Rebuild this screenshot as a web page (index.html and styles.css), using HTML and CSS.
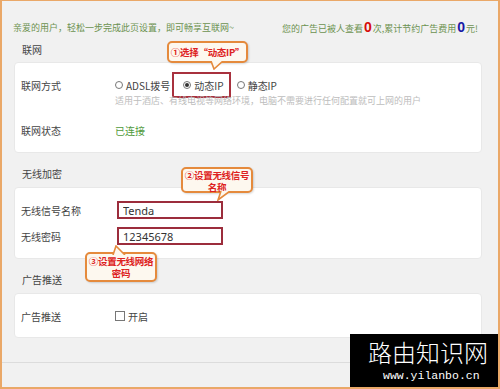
FILE: index.html
```html
<!DOCTYPE html>
<html lang="zh-CN">
<head>
    <meta charset="UTF-8">
    <meta name="viewport" content="width=device-width, initial-scale=1.0">
    <title>快速设置</title>
    <link rel="stylesheet" href="styles.css">
</head>
<body>
    <div class="page">
        <div class="topbar">
            <span class="welcome">亲爱的用户，轻松一步完成此页设置，即可畅享互联网~</span>
            <span class="stats">您的广告已被人查看<b class="num red">0</b>次,累计节约广告费用<b class="num blue">0</b>元!</span>
        </div>

        <div class="section-title">联网</div>
        <div class="card card-net">
            <div class="row">
                <span class="label">联网方式</span>
                <span class="choice"><span class="radio"></span>ADSL拨号</span>
                <span class="choice mark"><span class="radio on"></span>动态IP</span>
                <span class="choice"><span class="radio"></span>静态IP</span>
            </div>
            <div class="hint">适用于酒店、有线电视等网络环境，电脑不需要进行任何配置就可上网的用户</div>
            <div class="row row-status">
                <span class="label">联网状态</span>
                <span class="ok">已连接</span>
            </div>

            <div class="callout callout-1">
                ①选择“动态IP”
                <svg class="tail" width="16" height="9" viewBox="0 0 16 9"><path d="M1 0 L4 8 L13 0" fill="#fdf8ef" stroke="#e58a3c" stroke-width="1.6"/></svg>
            </div>
        </div>

        <div class="section-title">无线加密</div>
        <div class="card card-wifi">
            <div class="row">
                <span class="label">无线信号名称</span>
                <input class="field" type="text" value="Tenda">
            </div>
            <div class="row row-pass">
                <span class="label">无线密码</span>
                <input class="field" type="text" value="12345678">
            </div>

            <div class="callout callout-2">
                <div>②设置无线信号</div>
                <div>名称</div>
                <svg class="tail" width="16" height="10" viewBox="0 0 16 10"><path d="M4 0 L1 9 L13 0" fill="#fdf8ef" stroke="#e58a3c" stroke-width="1.6"/></svg>
            </div>
            <div class="callout callout-3">
                <div>③设置无线网络</div>
                <div>密码</div>
                <svg class="tail" width="16" height="10" viewBox="0 0 16 10"><path d="M1 10 L4 1 L13 10" fill="#fdf8ef" stroke="#e58a3c" stroke-width="1.6"/></svg>
            </div>
        </div>

        <div class="section-title">广告推送</div>
        <div class="card card-ad">
            <div class="row">
                <span class="label">广告推送</span>
                <span class="choice"><span class="box"></span>开启</span>
            </div>
        </div>

        <div class="footer"></div>

        <div class="watermark">
            <div class="wm-name">路由知识网</div>
            <div class="wm-url">www.yilanbo.cn</div>
        </div>
    </div>
</body>
</html>
```

FILE: styles.css
```css
body {
    margin: 0;
    font-family: "Noto Sans CJK SC", "Noto Sans", sans-serif;
    background: #fff;
}
.page {
    position: relative;
    width: 500px;
    height: 389px;
    box-sizing: border-box;
    border: 2px solid #eaa868;
    border-top-width: 1px;
    background: #f1f1f1;
    padding: 0 16px 0 12px;
    overflow: hidden;
}
.topbar {
    display: flex;
    justify-content: space-between;
    align-items: center;
    height: 16px;
    margin: 18px 4px 0 -1px;
    font-size: 9px;
    color: #6c9150;
}
.num {
    font-family: "Liberation Sans", Arial, sans-serif;
    font-size: 14px;
    font-weight: bold;
    margin: 0 1px;
}
.red {
    color: #d60c0c;
}
.blue {
    color: #1a1aa6;
}
.section-title {
    padding: 14px 0 6px 8px;
    line-height: 14px;
    font-size: 10px;
    color: #444;
}
.topbar + .section-title {
    padding-top: 8px;
    padding-bottom: 5px;
}
.card {
    position: relative;
    background: #fff;
    border: 1px solid #e8e8e8;
    border-radius: 4px;
    padding: 14px 0 14px 6px;
    box-sizing: border-box;
}
.card-net {
    height: 91px;
    padding-top: 14px;
}
.card-wifi {
    height: 72px;
    padding-top: 13px;
}
.card-ad {
    height: 45px;
    padding-top: 14px;
}
.row {
    display: flex;
    align-items: center;
    height: 16px;
    font-size: 10px;
    color: #444;
}
.card-wifi .row {
    height: 18px;
}
.row-pass {
    margin-top: 8px;
}
.row-status {
    margin-top: 14px;
}
.label {
    width: 94px;
    flex: none;
}
.choice {
    display: inline-flex;
    align-items: center;
    margin-right: 10px;
    color: #444;
}
.radio {
    width: 6px;
    height: 6px;
    border: 1px solid #777;
    border-radius: 50%;
    margin-right: 3px;
    position: relative;
}
.radio.on::after {
    content: "";
    position: absolute;
    left: 1px;
    top: 1px;
    width: 4px;
    height: 4px;
    border-radius: 50%;
    background: #333;
}
.box {
    width: 8px;
    height: 8px;
    border: 1px solid #777;
    margin-right: 3px;
}
.mark {
    height: 22px;
    margin: -5px 6px -5px -8px;
    padding: 0 5px 0 9px;
    border: 2px solid #a8313e;
}
.hint {
    margin: 1px 0 0 94px;
    line-height: 14px;
    font-size: 9px;
    color: #bdbdbd;
}
.ok {
    color: #4f9a3b;
}
.field {
    width: 106px;
    height: 18px;
    box-sizing: border-box;
    margin: 0 0 0 2px;
    padding: 0 4px;
    border: 2px solid #9c2d3c;
    font-family: "Noto Sans", "Liberation Sans", sans-serif;
    font-size: 11px;
    color: #333;
    background: #fff;
    outline: none;
}
.footer {
    margin: 24px -16px 0 -12px;
    border-top: 1px solid #dcdcdc;
}
.callout {
    position: absolute;
    box-sizing: border-box;
    background: #fdf8ef;
    border: 2px solid #e58a3c;
    border-radius: 5px;
    box-shadow: 1px 1px 2px rgba(0,0,0,0.15);
    font-size: 9.5px;
    font-weight: bold;
    line-height: 12px;
    letter-spacing: -0.3px;
    white-space: nowrap;
    color: #dd2222;
    text-align: center;
    z-index: 2;
}
.tail {
    position: absolute;
    display: block;
}
.callout-1 {
    left: 152px;
    top: -22px;
    width: 81px;
    height: 22px;
    padding-top: 3px;
}
.callout-1 .tail {
    left: 41px;
    top: 18px;
}
.callout-2 {
    left: 166px;
    top: -21px;
    width: 72px;
    height: 26px;
    padding-top: 0;
}
.callout-2 .tail {
    left: 34px;
    top: 22px;
}
.callout-3 {
    left: 70px;
    top: 64px;
    width: 72px;
    height: 30px;
    padding-top: 1px;
}
.callout-3 .tail {
    left: 25px;
    top: -9px;
}
.watermark {
    position: absolute;
    left: 348px;
    top: 333px;
    width: 150px;
    height: 60px;
    background: #000;
    color: #fff;
    z-index: 3;
}
.wm-name {
    margin: 6px 0 0 18px;
    font-size: 24px;
    line-height: 24px;
    font-weight: 300;
}
.wm-url {
    margin: 5px 0 0 33px;
    font-family: "Liberation Mono", "DejaVu Sans Mono", monospace;
    font-size: 11.5px;
    line-height: 13px;
}
```
